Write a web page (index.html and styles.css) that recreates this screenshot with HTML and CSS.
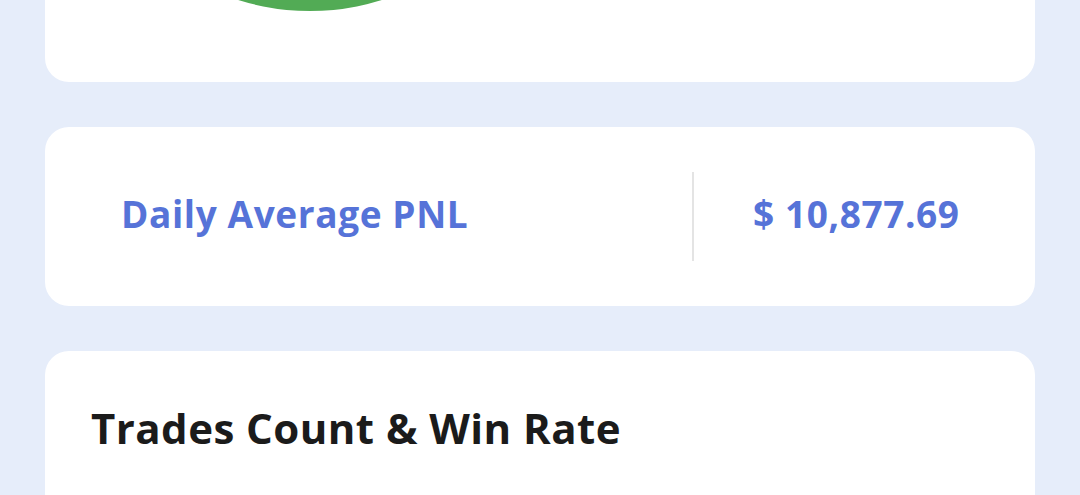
FILE: index.html
```html
<!DOCTYPE html>
<html lang="en">
<head>
<meta charset="utf-8">
<title>Stats</title>
<link rel="stylesheet" href="styles.css">
</head>
<body>
<main class="page">
  <section class="card chart-card">
    <svg class="pie" viewBox="0 0 990 82" width="990" height="82" aria-hidden="true">
      <circle cx="265" cy="-229" r="240" fill="#52AB55"/>
    </svg>
  </section>
  <section class="card pnl-card">
    <div class="pnl-label">Daily Average PNL</div>
    <div class="divider"></div>
    <div class="pnl-value">$ 10,877.69</div>
  </section>
  <section class="card trades-card">
    <h2 class="card-title">Trades Count &amp; Win Rate</h2>
  </section>
</main>
</body>
</html>
```
FILE: styles.css
```css
html, body {
  margin: 0;
  padding: 0;
  background: #E6EDFA;
  font-family: "Open Sans", "Liberation Sans", sans-serif;
}
.page {
  padding: 0 45px;
  display: flex;
  flex-direction: column;
  gap: 45px;
}
.card {
  background: #FFFFFF;
  border-radius: 24px;
}
.chart-card {
  height: 82px;
  border-radius: 0 0 24px 24px;
  overflow: hidden;
}
.pie {
  display: block;
}
.pnl-card {
  height: 179px;
  display: flex;
  align-items: center;
}
.pnl-label {
  flex: 0 0 571px;
  padding-left: 76px;
  padding-bottom: 6px;
  font-size: 37px;
  font-weight: 700;
  letter-spacing: 0.6px;
  color: #5673D8;
}
.divider {
  width: 2px;
  height: 89px;
  background: #E4E4E4;
}
.pnl-value {
  padding-left: 59px;
  padding-bottom: 6px;
  font-size: 37px;
  font-weight: 700;
  letter-spacing: 0.6px;
  color: #5673D8;
}
.trades-card {
  height: 200px;
  border-radius: 24px 24px 0 0;
  padding: 48px 46px 0;
}
.card-title {
  margin: 0;
  font-size: 42px;
  font-weight: 700;
  letter-spacing: 0.45px;
  color: #1B1B1B;
}
```
